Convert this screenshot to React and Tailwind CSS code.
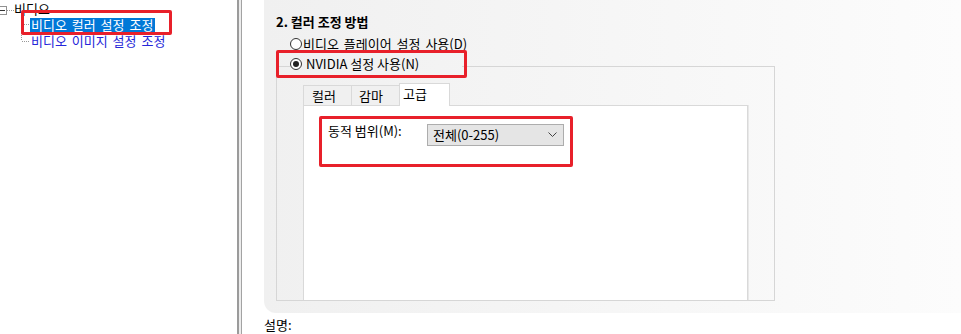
import React from 'react';

const Radio = ({ checked }) => (
    <span className="flex h-[12px] w-[12px] shrink-0 items-center justify-center rounded-full border border-[#333] bg-white">
        {checked && <span className="h-[6px] w-[6px] rounded-full bg-[#222]" />}
    </span>
);

const Tree = () => (
    <div className="relative w-[237px] shrink-0 bg-white pt-[1px] leading-[16px]">
        <div className="flex h-[16px] items-center">
            <svg width="14" height="16" className="shrink-0">
                <rect x="-2.5" y="5.5" width="9" height="8" fill="white" stroke="#919191" />
                <line x1="0" y1="9.5" x2="5" y2="9.5" stroke="#333" />
                <line x1="7" y1="9.5" x2="14" y2="9.5" stroke="#999" strokeDasharray="1 1" />
            </svg>
            <span className="text-black">비디오</span>
        </div>
        <div className="flex h-[16px] items-center">
            <svg width="30" height="16" className="shrink-0">
                <line x1="21.5" y1="0" x2="21.5" y2="16" stroke="#999" strokeDasharray="1 1" />
                <line x1="22" y1="7.5" x2="30" y2="7.5" stroke="#999" strokeDasharray="1 1" />
            </svg>
            <span className="flex h-[14px] items-center bg-[#0078d7] pl-[1px] pr-[2px] text-white [word-spacing:2px]">비디오 컬러 설정 조정</span>
        </div>
        <div className="flex h-[16px] items-center">
            <svg width="31" height="16" className="shrink-0">
                <line x1="21.5" y1="0" x2="21.5" y2="8" stroke="#999" strokeDasharray="1 1" />
                <line x1="22" y1="8.5" x2="30" y2="8.5" stroke="#999" strokeDasharray="1 1" />
            </svg>
            <span className="text-[#2626d9] [word-spacing:2px]">비디오 이미지 설정 조정</span>
        </div>
        {/* annotation */}
        <div className="pointer-events-none absolute left-[21px] top-[10px] h-[25px] w-[151px] rounded-[2px] border-[3px] border-[#e8202a]" />
    </div>
);

export default function App() {
    return (
        <div className="flex h-[334px] w-[961px] overflow-hidden bg-white font-['Noto_Sans_CJK_KR',sans-serif] text-[13px] text-black">
            <Tree />
            <div className="w-[2px] shrink-0 bg-[#9b9b9b]" />
            <div className="w-[2px] shrink-0 bg-[#ececec]" />
            <div className="w-[1px] shrink-0 bg-[#a3a3a3]" />

            <div className="flex flex-1 flex-col pl-[22px]">
                <div className="relative h-[313px] rounded-bl-[12px] bg-gradient-to-r from-[#f0f0f0] to-[#fcfcfc] pl-[12px] pt-[14px]">
                    <div className="text-[13px] font-bold leading-[16px]">2. 컬러 조정 방법</div>
                    <div className="ml-[14px] mt-[6px] flex h-[16px] items-center gap-[1px] leading-[16px]">
                        <Radio />
                        <span className="[word-spacing:2px]">비디오 플레이어 설정 사용(D)</span>
                    </div>

                    <fieldset className="mt-[4px] w-[499px] border border-[#d6d6d6]">
                        <legend className="ml-[13px] h-[20px] w-[172px]">
                            <div className="flex h-[16px] items-center gap-[4px] leading-[16px]">
                                <Radio checked />
                                <span>NVIDIA 설정 사용(N)</span>
                            </div>
                        </legend>
                        <div className="px-[26px] pt-[7px]">
                            <div className="flex h-[22px] items-end text-[13px] leading-[16px]">
                                <div className="flex h-[20px] w-[49px] items-center border border-b-0 border-[#d9d9d9] bg-[#f0f0f0] pl-[8px]">컬러</div>
                                <div className="flex h-[20px] w-[47px] items-center border-t border-[#d9d9d9] bg-[#f0f0f0] pl-[7px]">감마</div>
                                <div className="relative z-10 -mb-px flex h-[23px] w-[51px] items-start border border-b-0 border-[#d9d9d9] bg-white pl-[3px] pt-[2px]">고급</div>
                            </div>
                            <div className="h-[195px] border border-b-0 border-[#d9d9d9] bg-white pl-[15px] pt-[10px] shadow-[1px_0_0_#e8e8e8]">
                                <div className="flex h-[51px] w-[254px] items-start rounded-[2px] border-[3px] border-[#e8202a] pl-[6px] leading-[16px]">
                                    <div className="w-[99px] pt-[4px]">동적 범위(M):</div>
                                    <div className="mt-[5px] flex h-[22px] w-[137px] items-center justify-between border border-[#adadad] bg-[#e5e5e5] pl-[5px] pr-[6px]">
                                        <span>전체(0-255)</span>
                                        <svg width="9" height="6" viewBox="0 0 9 6">
                                            <polyline points="0.5,0.5 4.5,4.5 8.5,0.5" fill="none" stroke="#444" strokeWidth="1" />
                                        </svg>
                                    </div>
                                </div>
                            </div>
                        </div>
                    </fieldset>

                    {/* annotation */}
                    <div className="pointer-events-none absolute left-[12px] top-[50px] h-[28px] w-[191px] rounded-[2px] border-[3px] border-[#e8202a]" />
                </div>
                <div className="mt-[4px] leading-[16px]">설명:</div>
            </div>
        </div>
    );
}
